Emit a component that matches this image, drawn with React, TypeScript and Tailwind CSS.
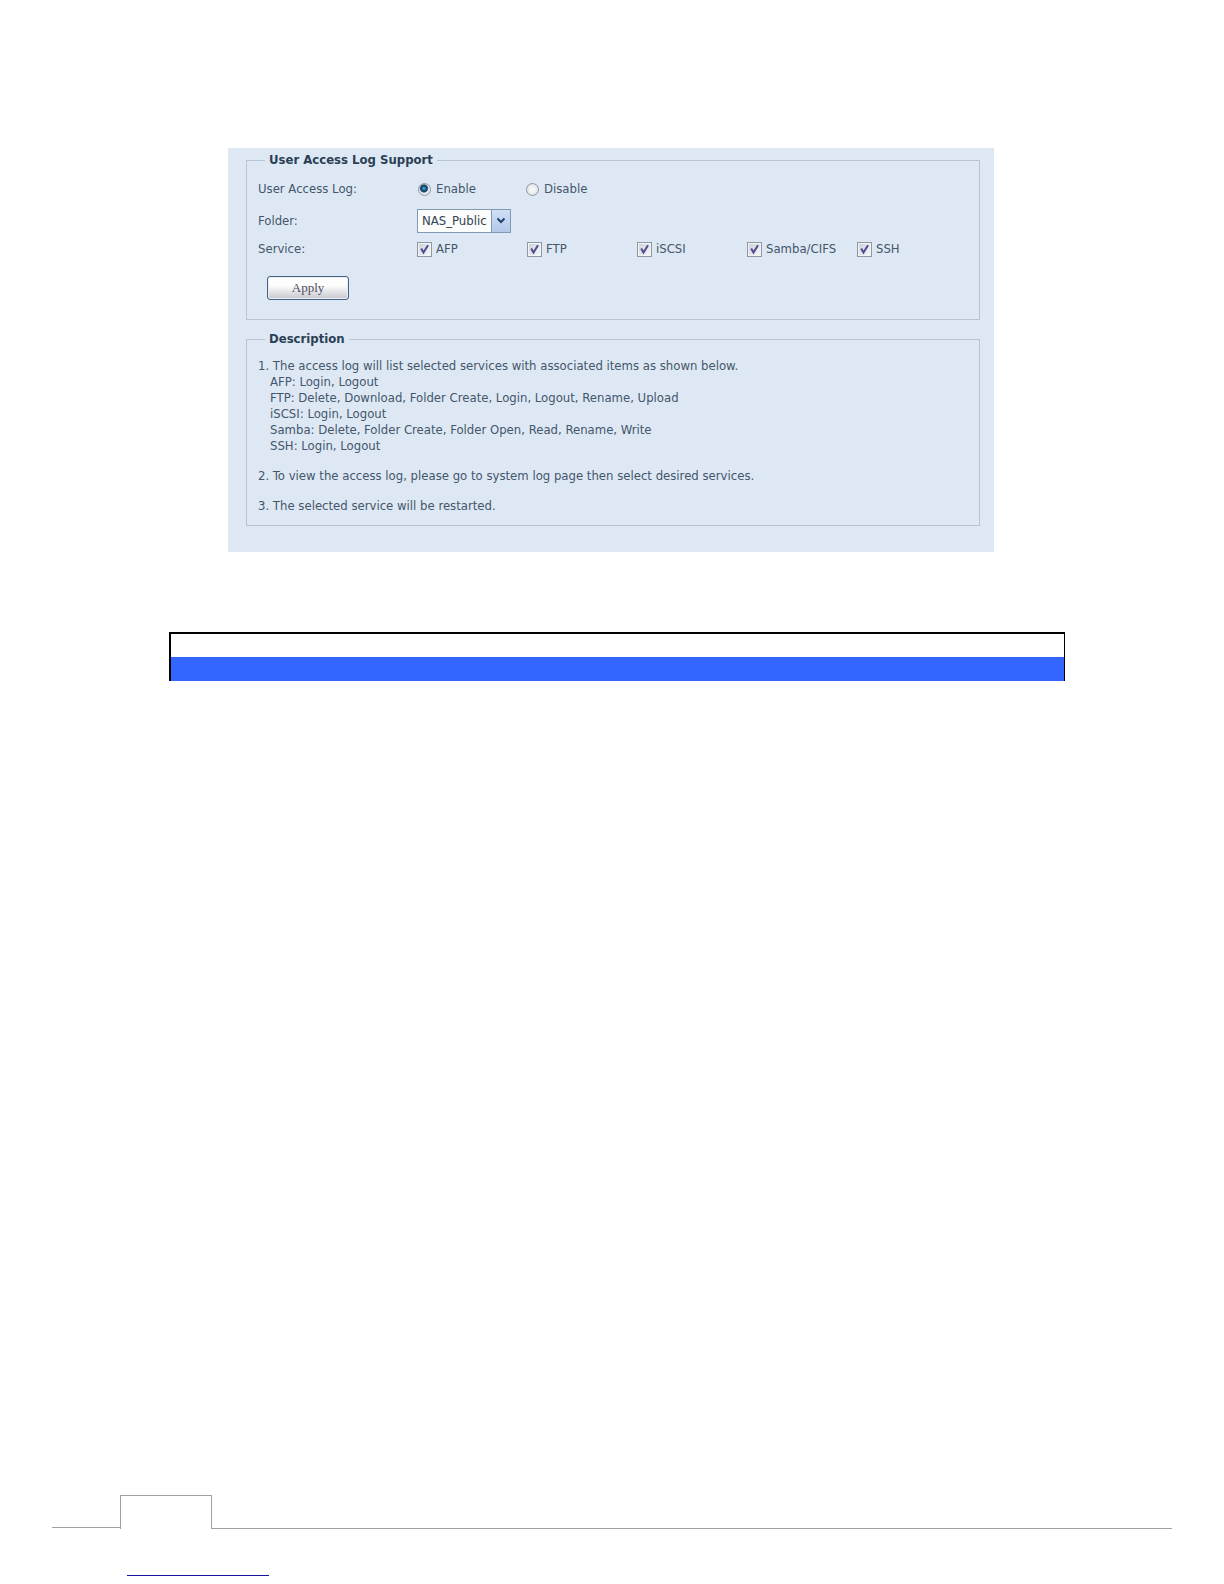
import React from "react";

const services = ["AFP", "FTP", "iSCSI", "Samba/CIFS", "SSH"];

const logItems = [
	"AFP: Login, Logout",
	"FTP: Delete, Download, Folder Create, Login, Logout, Rename, Upload",
	"iSCSI: Login, Logout",
	"Samba: Delete, Folder Create, Folder Open, Read, Rename, Write",
	"SSH: Login, Logout",
];

function Radio({ label, checked }: { label: string; checked?: boolean }) {
	return (
		<label className="flex items-center gap-[5px] w-[108px]">
			<input
				type="radio"
				name="access-log"
				defaultChecked={checked}
				className="appearance-none w-[13px] h-[13px] rounded-full border border-[#8d98a6] bg-[radial-gradient(circle,#f4f4f4_30%,#d3d6da_100%)] checked:bg-[radial-gradient(circle_at_45%_40%,#5cc0ea_0,#12507f_25%,#1b3e5e_38%,#e4e8ec_52%)]"
			/>
			{label}
		</label>
	);
}

function Checkbox({ label }: { label: string }) {
	return (
		<label className="flex items-center gap-1 w-[110px]">
			<span className="relative flex shrink-0">
				<input
					type="checkbox"
					defaultChecked
					className="peer appearance-none w-[15px] h-[15px] border border-[#8f979f] bg-linear-to-br from-[#cdd1d8] to-[#f7f7f9] shadow-[inset_0_0_0_1px_#f1f3f5]"
				/>
				<svg
					viewBox="0 0 15 15"
					className="absolute inset-0 hidden pointer-events-none peer-checked:block"
					fill="none"
					stroke="#4f4a94"
					strokeWidth="2"
				>
					<path d="M4.2 6.5 6.5 10.5 11 3.2" />
				</svg>
			</span>
			{label}
		</label>
	);
}

function AccessLogForm() {
	return (
		<fieldset className="min-w-0 px-[11px] pb-[19px] border border-[#b7c3d2]">
			<legend className="px-1 ml-[7px] font-bold leading-[24px] text-[#2b3f54]">
				User Access Log Support
			</legend>

			<div className="grid grid-cols-[159px_1fr] items-center">
				<span>User Access Log:</span>
				<div className="flex items-center h-[34px] pl-px">
					<Radio label="Enable" checked />
					<Radio label="Disable" />
				</div>

				<label htmlFor="folder">Folder:</label>
				<div className="flex items-center h-[30px]">
					<div className="relative">
						<select
							id="folder"
							className="block appearance-none w-[94px] h-6 pl-1 border border-[#8299b2] bg-[#fbfcfc] text-[#34424f]"
						>
							<option>NAS_Public</option>
						</select>
						<span className="absolute top-px right-px bottom-px flex items-center justify-center w-[19px] border-l border-[#8299b2] bg-linear-to-b from-[#cfdff5] to-[#b3c9ea] pointer-events-none">
							<svg width="10" height="8" viewBox="0 0 10 8" fill="none" stroke="#1f4268" strokeWidth="2">
								<path d="M1.5 1.5 5 5 8.5 1.5" />
							</svg>
						</span>
					</div>
				</div>

				<span>Service:</span>
				<div className="flex flex-wrap items-center min-h-[26px]">
					{services.map((service) => (
						<Checkbox key={service} label={service} />
					))}
				</div>
			</div>

			<button
				type="button"
				className="block w-[82px] h-6 mt-[14px] ml-[9px] rounded-[3px] border border-[#45617f] bg-linear-to-b from-[#fdfdfd] from-40% to-[#c6c6ce] shadow-[inset_0_0_0_1px_#e6eef5] font-['Liberation_Serif',serif] text-[13px] leading-[20px] text-[#4d4f5c]"
			>
				Apply
			</button>
		</fieldset>
	);
}

function Description() {
	return (
		<fieldset className="min-w-0 px-[11px] pb-[11px] mt-[7px] border border-[#b7c3d2]">
			<legend className="px-1 ml-[7px] font-bold leading-[24px] text-[#2b3f54]">
				Description
			</legend>

			<div className="flex flex-col gap-[14px] pt-[7px]">
				<div>
					<p>1. The access log will list selected services with associated items as shown below.</p>
					<ul className="pl-3">
						{logItems.map((item) => (
							<li key={item}>{item}</li>
						))}
					</ul>
				</div>
				<p>2. To view the access log, please go to system log page then select desired services.</p>
				<p>3. The selected service will be restarted.</p>
			</div>
		</fieldset>
	);
}

function Footer() {
	return (
		<footer className="px-[52px] pb-2 mt-auto">
			<div className="flex items-start">
				<div className="w-[68px] h-[33px] border-b border-[#a0a0a0]"></div>
				<div className="w-[92px] h-[34px] border-t border-x border-[#a0a0a0]"></div>
				<div className="flex-1 h-[34px] border-b border-[#a0a0a0]"></div>
			</div>
			<div className="w-[142px] h-px mt-[46px] ml-[75px] bg-[#1414a0]"></div>
		</footer>
	);
}

function App() {
	return (
		<div className="flex flex-col min-h-screen bg-white font-['DejaVu_Sans_Condensed','DejaVu_Sans',sans-serif] text-[13px] leading-[16px] text-[#43566a]">
			<main className="px-4 pt-[148px] pb-10 lg:pl-[169px] lg:pr-[159px]">
				<section className="px-[18px] pb-[26px] bg-[#dee8f5] lg:pr-[14px] lg:ml-[59px] lg:mr-[71px]">
					<AccessLogForm />
					<Description />
				</section>

				<div className="mt-20 border-t-2 border-l-2 border-r border-black">
					<div className="h-[23px]"></div>
					<div className="h-6 bg-[#3366ff]"></div>
				</div>
			</main>

			<Footer />
		</div>
	);
}

export default App;
